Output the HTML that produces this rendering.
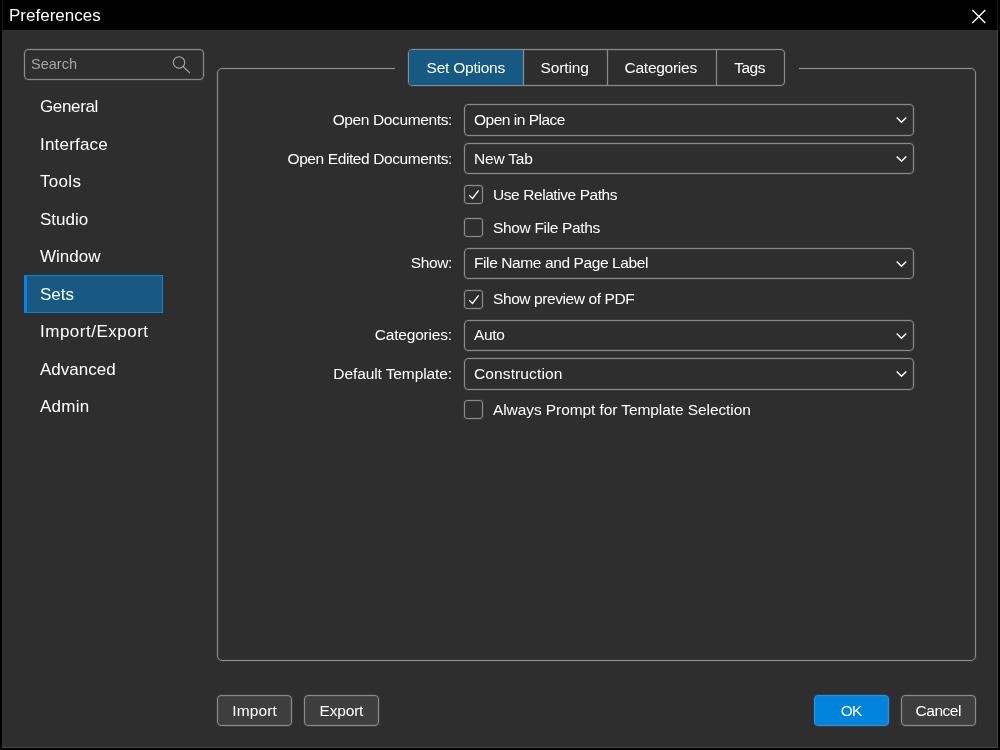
<!DOCTYPE html>
<html><head><meta charset="utf-8">
<style>
*{box-sizing:border-box;margin:0;padding:0}
html,body{width:1000px;height:750px;overflow:hidden;background:#000}
body{position:relative;font-family:"Liberation Sans",sans-serif;color:#fff}
#root{position:absolute;left:0;top:0;width:1000px;height:750px;will-change:transform}
.a{position:absolute}
.t{position:absolute;white-space:nowrap;line-height:20px;height:20px}
#dlg{position:absolute;left:2px;top:0;width:996px;height:748px;background:#2e2e2e;border-right:1px solid #444;border-bottom:1px solid #444}
#title{position:absolute;left:0;top:0;width:1000px;height:30px;background:#000;border-left:2px solid #000}
.box{position:absolute;border:1px solid #8a8a8a;border-radius:4px;box-shadow:0 0 0 1px rgba(140,140,140,0.13),inset 0 0 0 1px rgba(140,140,140,0.13)}
.dd{position:absolute;left:464px;width:450px;height:32px;border:1px solid #8a8a8a;border-radius:4px;box-shadow:0 0 0 1px rgba(140,140,140,0.13),inset 0 0 0 1px rgba(140,140,140,0.13)}
.dd svg{position:absolute;right:6px;top:11px}
.cb{position:absolute;left:464px;width:19px;height:19px;border:1px solid #8a8a8a;border-radius:3px;box-shadow:0 0 0 1px rgba(140,140,140,0.13),inset 0 0 0 1px rgba(140,140,140,0.13)}
.btn{position:absolute;top:695px;height:31px;border:1px solid #8a8a8a;border-radius:4px;background:#3e3e3e;box-shadow:0 0 0 1px rgba(140,140,140,0.13),inset 0 0 0 1px rgba(140,140,140,0.13)}
.tabs div.sep{position:absolute;top:0;width:1px;height:100%;background:#8a8a8a;box-shadow:1px 0 0 rgba(140,140,140,0.13),-1px 0 0 rgba(140,140,140,0.13)}
</style></head><body><div id="root">
<div id="dlg"></div>
<div id="title"></div>
<div class="a" style="left:2px;top:0;width:1px;height:30px;background:#141414"></div>
<div class="a" style="left:997px;top:0;width:1px;height:30px;background:#1a1a1a"></div>

<div class="t" style="left:9px;top:6px;font-size:17px;letter-spacing:0.0px">Preferences</div>
<svg class="a" style="left:970px;top:8px" width="18" height="18" viewBox="0 0 18 18"><path d="M2.3 2.1 L15.3 15.1 M15.3 2.1 L2.3 15.1" stroke="#fff" stroke-width="1.4" fill="none"/></svg>
<div class="box" style="left:24px;top:49px;width:180px;height:31px"></div>
<div class="t" style="left:31px;top:54px;font-size:14.5px;color:#a6a6a6;letter-spacing:0.0px">Search</div>
<svg class="a" style="left:170px;top:53px" width="24" height="24" viewBox="0 0 24 24"><circle cx="9" cy="9.4" r="5.7" stroke="#a6a6a6" stroke-width="1.15" fill="none"/><path d="M13 13.5 L20 20.2" stroke="#a6a6a6" stroke-width="1.15"/></svg>
<div class="a" style="left:24px;top:275px;width:139px;height:38px;background:#185983;border:1px solid #0683e4;border-left-width:3px"></div>
<div class="t" style="left:40px;top:97px;font-size:17px;letter-spacing:-0.35px">General</div>
<div class="t" style="left:40px;top:135px;font-size:17px;letter-spacing:0.2px">Interface</div>
<div class="t" style="left:40px;top:172px;font-size:17px;letter-spacing:0.3px">Tools</div>
<div class="t" style="left:40px;top:210px;font-size:17px;letter-spacing:0px">Studio</div>
<div class="t" style="left:40px;top:247px;font-size:17px;letter-spacing:0px">Window</div>
<div class="t" style="left:40px;top:285px;font-size:17px;letter-spacing:0px">Sets</div>
<div class="t" style="left:40px;top:322px;font-size:17px;letter-spacing:0.5px">Import/Export</div>
<div class="t" style="left:40px;top:360px;font-size:17px;letter-spacing:0px">Advanced</div>
<div class="t" style="left:40px;top:397px;font-size:17px;letter-spacing:0.25px">Admin</div>
<div class="box" style="left:217px;top:68px;width:759px;height:593px;border-radius:5px"></div>
<div class="a" style="left:395px;top:60px;width:404px;height:20px;background:#2e2e2e"></div>
<div class="box tabs" style="left:408px;top:49px;width:377px;height:37px;overflow:hidden">
<div class="a" style="left:0;top:0;width:114px;height:35px;background:#165a83"></div>
<div class="sep" style="left:114px"></div><div class="sep" style="left:198px"></div><div class="sep" style="left:307px"></div>
</div>
<div class="t" style="left:426.6px;top:58px;font-size:15.5px;letter-spacing:-0.24px">Set Options</div>
<div class="t" style="left:540.5px;top:58px;font-size:15.5px;letter-spacing:-0.107px">Sorting</div>
<div class="t" style="left:624.6px;top:58px;font-size:15.5px;letter-spacing:-0.267px">Categories</div>
<div class="t" style="left:734.3000000000001px;top:58px;font-size:15.5px;letter-spacing:-0.534px">Tags</div>
<div class="t" style="right:548px;top:110px;font-size:15.5px;letter-spacing:-0.375px">Open Documents:</div>
<div class="t" style="right:548px;top:149px;font-size:15.5px;letter-spacing:-0.394px">Open Edited Documents:</div>
<div class="t" style="right:548px;top:253px;font-size:15.5px;letter-spacing:-0.36px">Show:</div>
<div class="t" style="right:548px;top:325px;font-size:15.5px;letter-spacing:-0.176px">Categories:</div>
<div class="t" style="right:548px;top:364px;font-size:15.5px;letter-spacing:-0.1px">Default Template:</div>
<div class="dd" style="top:104px;height:32px"><div class="t" style="left:9px;top:5px;font-size:15.5px;letter-spacing:-0.493px">Open in Place</div><svg width="14" height="8" viewBox="0 0 14 8"><path d="M3.7 1.5 L8.5 6.2 L13.3 1.5" stroke="#fff" stroke-width="1.5" fill="none"/></svg></div>
<div class="dd" style="top:143px;height:31px"><div class="t" style="left:9px;top:5px;font-size:15.5px;letter-spacing:-0.185px">New Tab</div><svg width="14" height="8" viewBox="0 0 14 8"><path d="M3.7 1.5 L8.5 6.2 L13.3 1.5" stroke="#fff" stroke-width="1.5" fill="none"/></svg></div>
<div class="dd" style="top:248px;height:31px"><div class="t" style="left:9px;top:4px;font-size:15.5px;letter-spacing:-0.397px">File Name and Page Label</div><svg width="14" height="8" viewBox="0 0 14 8"><path d="M3.7 1.5 L8.5 6.2 L13.3 1.5" stroke="#fff" stroke-width="1.5" fill="none"/></svg></div>
<div class="dd" style="top:320px;height:31px"><div class="t" style="left:9px;top:4px;font-size:15.5px;letter-spacing:-0.321px">Auto</div><svg width="14" height="8" viewBox="0 0 14 8"><path d="M3.7 1.5 L8.5 6.2 L13.3 1.5" stroke="#fff" stroke-width="1.5" fill="none"/></svg></div>
<div class="dd" style="top:358px;height:32px"><div class="t" style="left:9px;top:5px;font-size:15.5px;letter-spacing:0.118px">Construction</div><svg width="14" height="8" viewBox="0 0 14 8"><path d="M3.7 1.5 L8.5 6.2 L13.3 1.5" stroke="#fff" stroke-width="1.5" fill="none"/></svg></div>
<div class="cb" style="top:185px"><svg class="a" style="left:0;top:0" width="17" height="17" viewBox="0 0 17 17"><path d="M4.2 9.3 L7.5 12.5 L13.6 4.3" stroke="#fff" stroke-width="1.3" fill="none"/></svg></div>
<div class="t" style="left:493px;top:185px;font-size:15.5px;letter-spacing:-0.426px">Use Relative Paths</div>
<div class="cb" style="top:218px"></div>
<div class="t" style="left:493px;top:218px;font-size:15.5px;letter-spacing:-0.333px">Show File Paths</div>
<div class="cb" style="top:290px"><svg class="a" style="left:0;top:0" width="17" height="17" viewBox="0 0 17 17"><path d="M4.2 9.3 L7.5 12.5 L13.6 4.3" stroke="#fff" stroke-width="1.3" fill="none"/></svg></div>
<div class="t" style="left:493px;top:289px;font-size:15.5px;letter-spacing:-0.41px">Show preview of PDF</div>
<div class="cb" style="top:400px"></div>
<div class="t" style="left:493px;top:400px;font-size:15.5px;letter-spacing:-0.083px">Always Prompt for Template Selection</div>
<div class="btn" style="left:217px;width:75px;background:#3e3e3e;border-color:#8a8a8a"></div>
<div class="t" style="left:217px;width:75px;text-align:center;top:701px;font-size:15.5px;letter-spacing:0.128px;text-indent:0.128px">Import</div>
<div class="btn" style="left:304px;width:75px;background:#3e3e3e;border-color:#8a8a8a"></div>
<div class="t" style="left:304px;width:75px;text-align:center;top:701px;font-size:15.5px;letter-spacing:-0.192px;text-indent:-0.192px">Export</div>
<div class="btn" style="left:814px;width:75px;background:#0083db;border-color:#1a95f5"></div>
<div class="t" style="left:814px;width:75px;text-align:center;top:701px;font-size:15.5px;letter-spacing:-0.7px;text-indent:-0.7px">OK</div>
<div class="btn" style="left:901px;width:75px;background:#3e3e3e;border-color:#8a8a8a"></div>
<div class="t" style="left:901px;width:75px;text-align:center;top:701px;font-size:15.5px;letter-spacing:-0.48px;text-indent:-0.48px">Cancel</div>
</div></body></html>
